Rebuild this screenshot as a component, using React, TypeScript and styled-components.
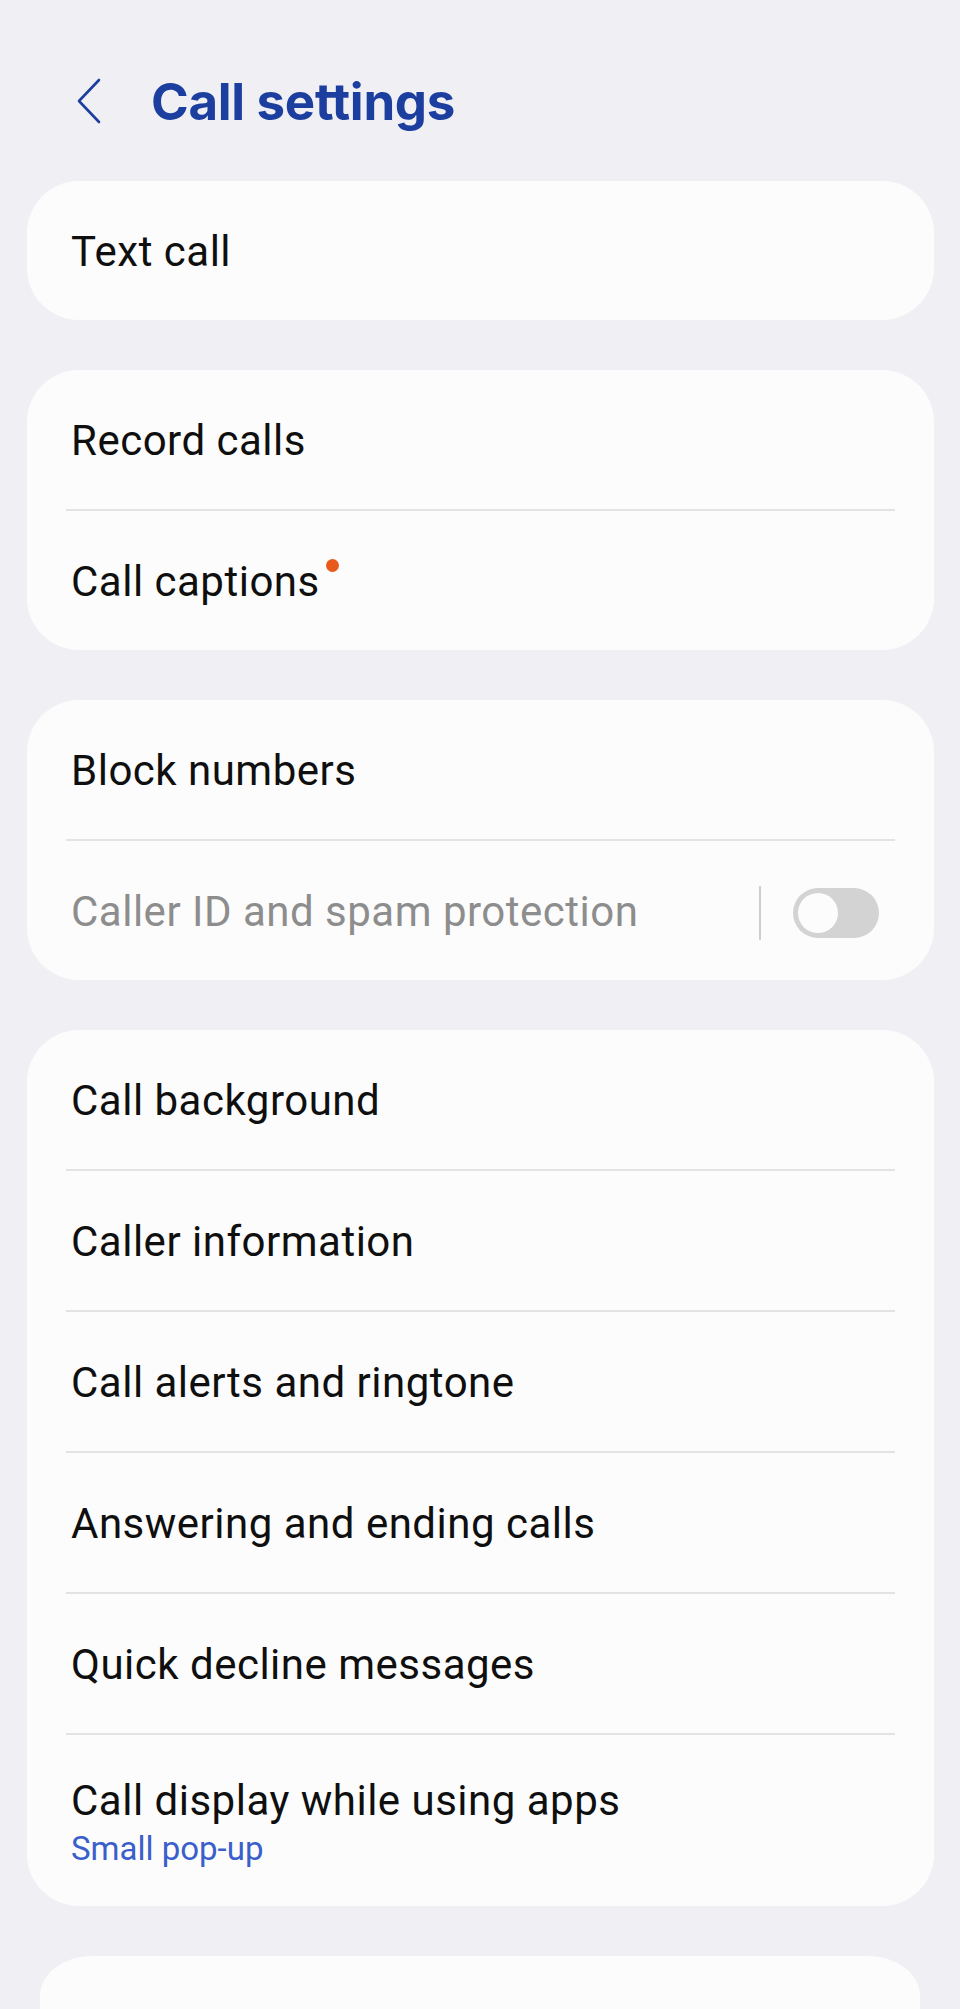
import React from "react";
import styled, { createGlobalStyle } from "styled-components";

const Global = createGlobalStyle`
  *, *::before, *::after { box-sizing: border-box; }
  html, body {
    margin: 0;
    padding: 0;
    background: #f0f0f4;
  }
  body {
    font-family: Roboto, "Noto Sans", "Liberation Sans", sans-serif;
    -webkit-font-smoothing: antialiased;
  }
`;

const Page = styled.div`
  display: flex;
  flex-direction: column;
  min-height: 2009px;
  overflow: hidden;
`;

const Header = styled.header`
  display: flex;
  align-items: center;
  height: 161px;
  padding: 41px 0 0 75px;
  gap: 49px;
`;

const BackButton = styled.button`
  display: flex;
  align-items: center;
  justify-content: center;
  width: 27px;
  height: 48px;
  padding: 0;
  border: 0;
  background: transparent;
  color: #1c3f9f;
`;

const Title = styled.h1`
  margin: 0;
  font-family: Inter, Roboto, sans-serif;
  font-weight: 700;
  font-size: 51px;
  letter-spacing: -0.3px;
  color: #1c3f9f;
`;

const List = styled.div`
  display: flex;
  flex-direction: column;
  gap: 50px;
  padding: 20px 26px 0 27px;
`;

const Card = styled.section<{ $peek?: boolean }>`
  display: flex;
  flex-direction: column;
  background: #fcfcfc;
  border-radius: ${(p) => (p.$peek ? "52px / 40px" : "52px")};
  margin: ${(p) => (p.$peek ? "0 14px 0 13px" : "0")};
  min-height: ${(p) => (p.$peek ? "120px" : "0")};
`;

const Row = styled.div<{ $tall?: boolean }>`
  display: flex;
  align-items: center;
  height: ${(p) => (p.$tall ? "171px" : "139px")};
  padding: 4px 55px 0 44px;
`;

const Divider = styled.div`
  height: 2px;
  margin: 0 39px;
  background: #e3e3e5;
`;

const Texts = styled.div`
  display: flex;
  flex-direction: column;
  flex: 1;
  min-width: 0;
`;

const Label = styled.span<{ $disabled?: boolean }>`
  position: relative;
  align-self: flex-start;
  font-size: 42px;
  font-weight: 400;
  color: ${(p) => (p.$disabled ? "#8d8d8d" : "#0f0f0f")};
  line-height: 1.2;
  letter-spacing: 0.5px;
`;

const Sub = styled.span`
  font-size: 33px;
  color: #3a5fcb;
  line-height: 1.2;
  margin-top: 3px;
  letter-spacing: 0;
`;

const Badge = styled.span`
  position: absolute;
  right: -19px;
  top: 2px;
  width: 13px;
  height: 13px;
  border-radius: 50%;
  background: #e8591c;
`;

const VSep = styled.div`
  width: 2px;
  height: 54px;
  background: #cfcfcf;
  margin-right: 32px;
`;

const Switch = styled.div`
  display: flex;
  align-items: center;
  width: 86px;
  height: 50px;
  border-radius: 25px;
  background: #d3d3d3;
  padding: 0 5px;
`;

const Thumb = styled.div`
  width: 40px;
  height: 40px;
  border-radius: 50%;
  background: #fcfcfc;
`;

type Item = { label: string; sub?: string; badge?: boolean };

const group4: Item[] = [
  { label: "Call background" },
  { label: "Caller information" },
  { label: "Call alerts and ringtone" },
  { label: "Answering and ending calls" },
  { label: "Quick decline messages" },
  { label: "Call display while using apps", sub: "Small pop-up" },
];

function renderRows(items: Item[]) {
  return items.map((it, i) => (
    <React.Fragment key={it.label}>
      {i > 0 && <Divider />}
      <Row $tall={!!it.sub}>
        <Texts>
          <Label>
            {it.label}
            {it.badge && <Badge />}
          </Label>
          {it.sub && <Sub>{it.sub}</Sub>}
        </Texts>
      </Row>
    </React.Fragment>
  ));
}

export default function App() {
  return (
    <>
      <Global />
      <Page>
        <Header>
          <BackButton aria-label="Back">
            <svg width="27" height="48" viewBox="0 0 27 48" fill="none">
              <path
                d="M24 3 L4 24 L24 45"
                stroke="currentColor"
                strokeWidth="2.6"
                strokeLinecap="round"
                strokeLinejoin="round"
              />
            </svg>
          </BackButton>
          <Title>Call settings</Title>
        </Header>
        <List>
          <Card>{renderRows([{ label: "Text call" }])}</Card>
          <Card>
            {renderRows([
              { label: "Record calls" },
              { label: "Call captions", badge: true },
            ])}
          </Card>
          <Card>
            {renderRows([{ label: "Block numbers" }])}
            <Divider />
            <Row>
              <Texts>
                <Label $disabled>Caller ID and spam protection</Label>
              </Texts>
              <VSep />
              <Switch>
                <Thumb />
              </Switch>
            </Row>
          </Card>
          <Card>{renderRows(group4)}</Card>
          <Card $peek />
        </List>
      </Page>
    </>
  );
}
